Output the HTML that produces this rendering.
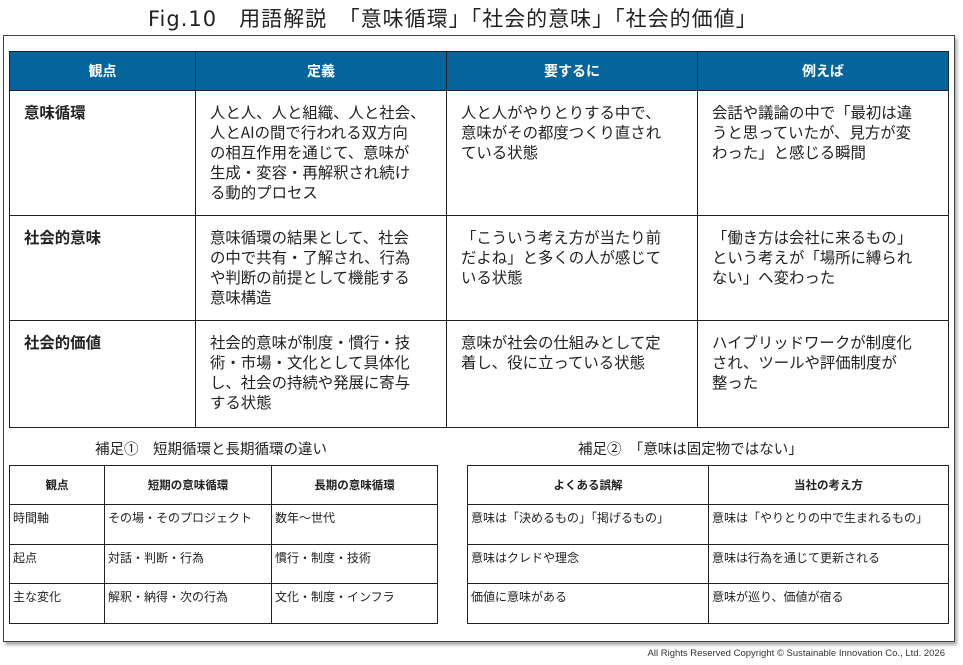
<!DOCTYPE html>
<html><head><meta charset="utf-8"><style>
*{margin:0;padding:0;box-sizing:border-box}
body{width:963px;height:665px;background:#fff;position:relative;font-family:"Liberation Sans","Noto Sans CJK JP",sans-serif;color:#222;overflow:hidden}
.t{position:absolute;left:148px;top:3px;white-space:nowrap;font-size:21px;color:#222;letter-spacing:1px;font-family:"DejaVu Sans","Noto Sans CJK JP",sans-serif}
.frame{position:absolute;left:3px;top:35px;width:952px;height:607px;border:1.5px solid #444;box-shadow:2px 3px 3px #aaa}
table{position:absolute;border-collapse:collapse;table-layout:fixed}
td,th{border:1.5px solid #222;vertical-align:top}
.m{left:9px;top:51px;width:939px}
.m th{background:#03659b;color:#fff;height:39px;font-size:14px;vertical-align:middle;font-weight:bold}
.m td{font-size:15.4px;line-height:20px;padding:11px 0 0 14px;font-family:"Noto Sans CJK JP",sans-serif;white-space:nowrap;overflow:hidden}
.m td.h{font-weight:bold;padding-left:14px}
.s{font-size:12px}
.s th{height:39px;font-size:11.5px;vertical-align:middle;font-weight:bold}
.s td{height:39.5px;padding:5px 3px 0 3px;line-height:16px}
.cap{position:absolute;font-size:14.5px;color:#222}
.f{position:absolute;right:18px;top:648px;font-size:9.5px;color:#333}
</style></head><body>
<div class="t">Fig.10　用語解説　「意味循環」「社会的意味」「社会的価値」</div>
<div class="frame"></div>
<table class="m">
<colgroup><col style="width:186px"><col style="width:251px"><col style="width:251px"><col style="width:251px"></colgroup>
<tr><th>観点</th><th>定義</th><th>要するに</th><th>例えば</th></tr>
<tr style="height:125px"><td class="h">意味循環</td><td>人と人、人と組織、人と社会、<br>人とAIの間で行われる双方向<br>の相互作用を通じて、意味が<br>生成・変容・再解釈され続け<br>る動的プロセス</td><td>人と人がやりとりする中で、<br>意味がその都度つくり直され<br>ている状態</td><td>会話や議論の中で「最初は違<br>うと思っていたが、見方が変<br>わった」と感じる瞬間</td></tr>
<tr style="height:105px"><td class="h">社会的意味</td><td>意味循環の結果として、社会<br>の中で共有・了解され、行為<br>や判断の前提として機能する<br>意味構造</td><td>「こういう考え方が当たり前<br>だよね」と多くの人が感じて<br>いる状態</td><td>「働き方は会社に来るもの」<br>という考えが「場所に縛られ<br>ない」へ変わった</td></tr>
<tr style="height:107px"><td class="h">社会的価値</td><td>社会的意味が制度・慣行・技<br>術・市場・文化として具体化<br>し、社会の持続や発展に寄与<br>する状態</td><td>意味が社会の仕組みとして定<br>着し、役に立っている状態</td><td>ハイブリッドワークが制度化<br>され、ツールや評価制度が<br>整った</td></tr>
</table>
<div class="cap" style="left:95px;top:438px">補足①　短期循環と長期循環の違い</div>
<div class="cap" style="left:578px;top:438px">補足②　「意味は固定物ではない」</div>
<table class="s" style="left:9px;top:465px;width:428px">
<colgroup><col style="width:95px"><col style="width:167px"><col style="width:166px"></colgroup>
<tr><th>観点</th><th>短期の意味循環</th><th>長期の意味循環</th></tr>
<tr><td>時間軸</td><td>その場・そのプロジェクト</td><td>数年〜世代</td></tr>
<tr><td>起点</td><td>対話・判断・行為</td><td>慣行・制度・技術</td></tr>
<tr><td>主な変化</td><td>解釈・納得・次の行為</td><td>文化・制度・インフラ</td></tr>
</table>
<table class="s" style="left:467px;top:465px;width:481px">
<colgroup><col style="width:241px"><col style="width:240px"></colgroup>
<tr><th>よくある誤解</th><th>当社の考え方</th></tr>
<tr><td>意味は「決めるもの」「掲げるもの」</td><td>意味は「やりとりの中で生まれるもの」</td></tr>
<tr><td>意味はクレドや理念</td><td>意味は行為を通じて更新される</td></tr>
<tr><td>価値に意味がある</td><td>意味が巡り、価値が宿る</td></tr>
</table>
<div class="f">All Rights Reserved Copyright © Sustainable Innovation Co., Ltd. 2026</div>
</body></html>
